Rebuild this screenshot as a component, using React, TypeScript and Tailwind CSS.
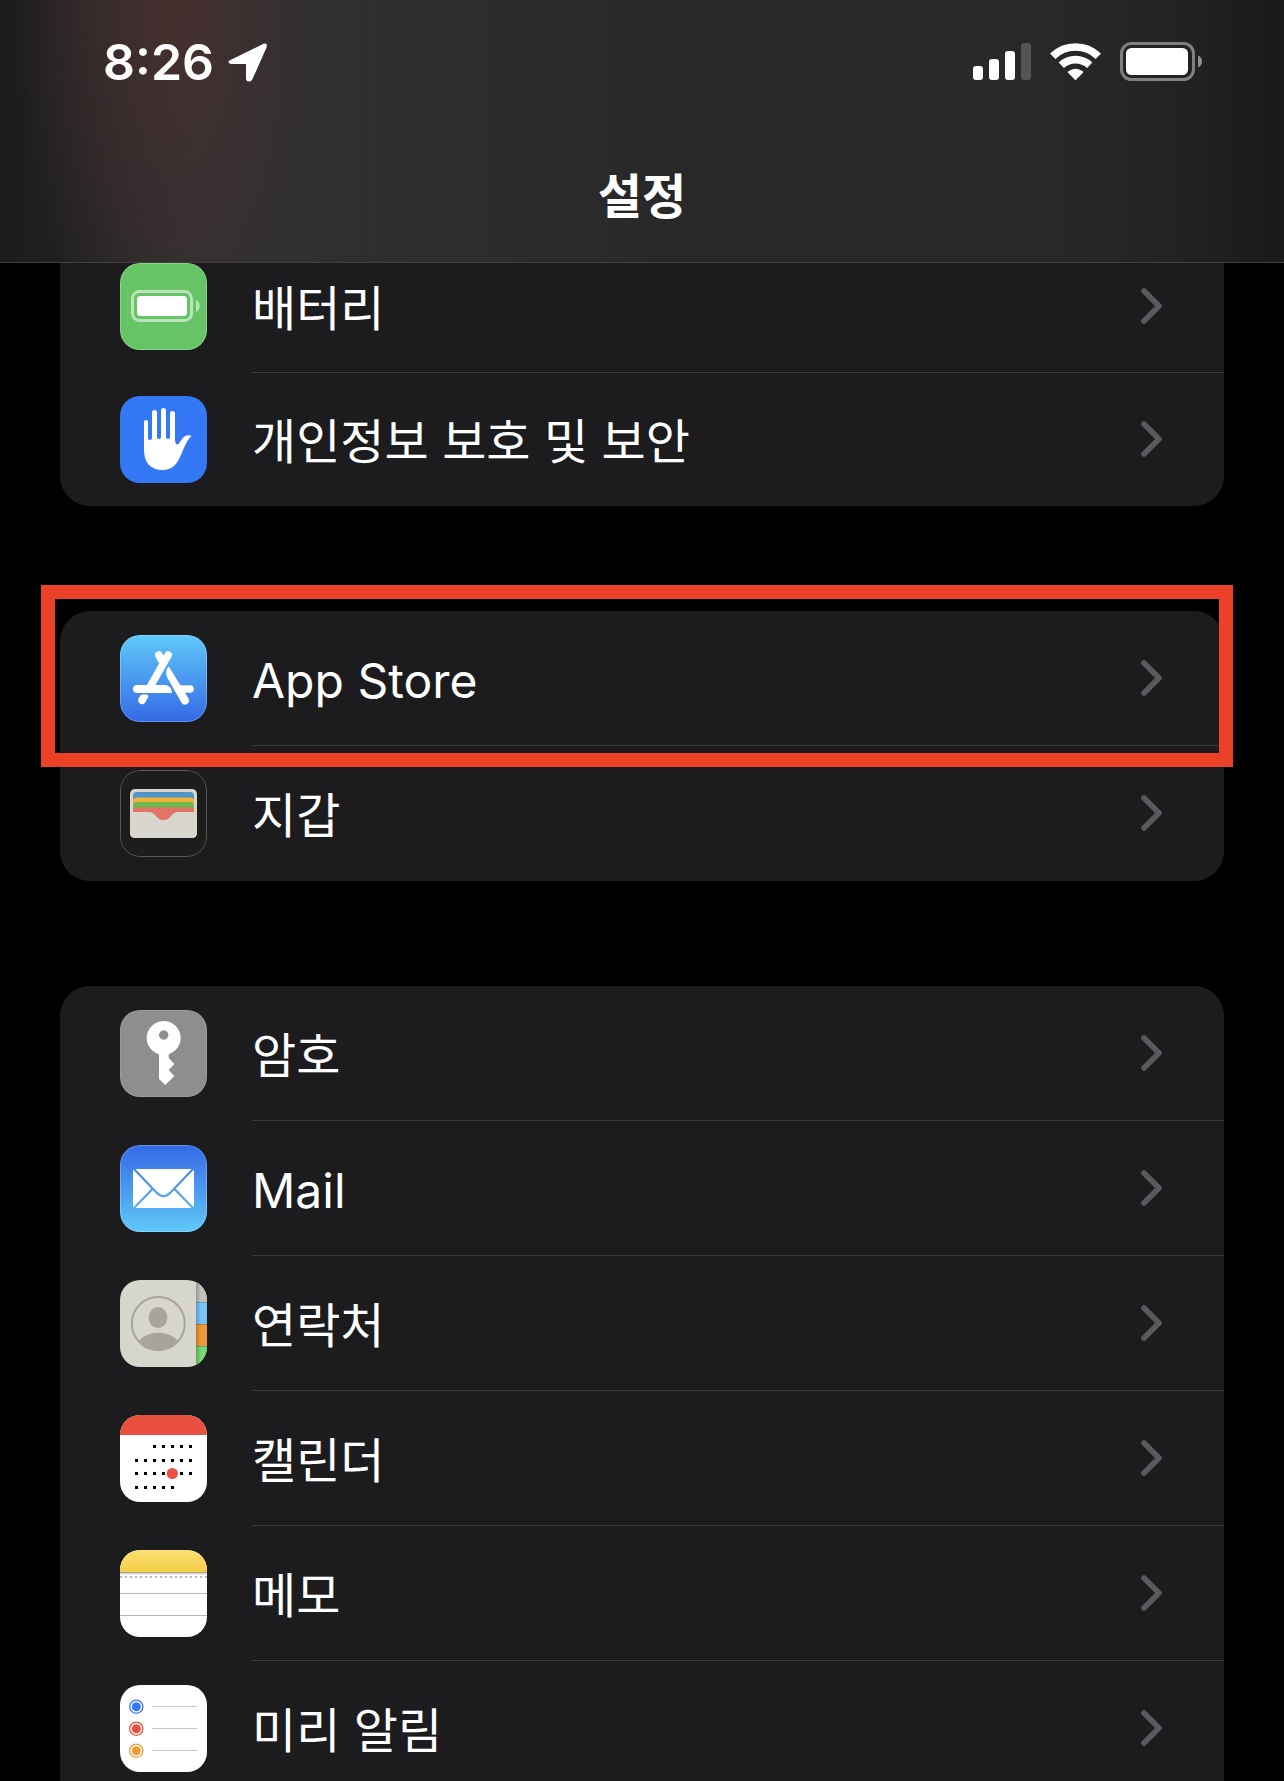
import type { ReactNode } from "react";

type RowItem = { label: string; icon: ReactNode; highlighted?: boolean };
type Group = { shape: string; rowHeight: string; items: RowItem[] };

function Tile({ children, id }: { children: ReactNode; id: string }) {
  return (
    <svg viewBox="0 0 87 87" className="size-[87px] shrink-0" aria-hidden="true">
      <defs>
        <clipPath id={`${id}-clip`}>
          <rect width="87" height="87" rx="20" />
        </clipPath>
      </defs>
      <g clipPath={`url(#${id}-clip)`}>{children}</g>
    </svg>
  );
}

function Rim({ opacity = 0.25 }: { opacity?: number }) {
  return <rect x="0.5" y="0.5" width="86" height="86" rx="19.5" fill="none" stroke="#fff" strokeOpacity={opacity} />;
}

function BatteryTile() {
  return (
    <Tile id="battery">
      <rect width="87" height="87" fill="#67c466" />
      <rect x="12.5" y="28.5" width="59" height="29" rx="7" fill="none" stroke="#fff" strokeOpacity="0.55" strokeWidth="3" />
      <rect x="17" y="33" width="50" height="20" rx="3.5" fill="#fff" />
      <path d="M76 37c5 2 5 10 0 12z" fill="#fff" fillOpacity="0.55" />
      <Rim />
    </Tile>
  );
}

function PrivacyTile() {
  return (
    <Tile id="privacy">
      <rect width="87" height="87" fill="#3478f6" />
      <path
        fill="#fff"
        d="M24 26a2 2 0 0 1 4 0V42q0 2 2 2t2-2V16.5a2.5 2.5 0 0 1 5 0V41q0 2 2 2t2-2V14.5a2.5 2.5 0 0 1 5 0V41q0 2 2 2t2-2V17.5a2.5 2.5 0 0 1 5 0V43q0 7 3.5 5C61 45 63 39.300 68.500 39.300q4.500 0 2 1.700C66 45.500 63.500 54 60 61C57 68 52 74 42.500 74C30 74 24 66 24 54Z"
      />
    </Tile>
  );
}

function AppStoreTile() {
  return (
    <Tile id="appstore">
      <defs>
        <linearGradient id="appstore-bg" x1="0" y1="0" x2="0" y2="1">
          <stop offset="0" stopColor="#5fc9f8" />
          <stop offset="1" stopColor="#3569e6" />
        </linearGradient>
      </defs>
      <rect width="87" height="87" fill="url(#appstore-bg)" />
      <g stroke="#fff" strokeWidth="7.6" strokeLinecap="round" fill="none">
        <path d="M48.200 20L29.500 53" />
        <path d="M38.800 20L42.500 26.500" />
        <path d="M61 54H70" />
      </g>
      <path fill="#fff" d="M17 50H46q5.500 1 6 8H17a4 4 0 0 1 0-8Z" />
      <path fill="#fff" d="M48.800 31.500C46 34 45.300 38.500 47.500 43L61.400 67.500a4 4 0 0 0 7-4.200Z" />
      <path fill="#fff" d="M20.500 60.300q4-2.200 8.200 0.500L25.300 67.500a3.900 3.900 0 0 1-6.800-3.700Z" />
      <Rim />
    </Tile>
  );
}

function WalletTile() {
  return (
    <Tile id="wallet">
      <rect width="87" height="87" fill="#1d1d1c" />
      <rect x="10" y="19" width="67" height="49" rx="5" fill="#d9d6cd" />
      <path d="M13 45V26q0-4 4-4H70q4 0 4 4V45Z" fill="#4e95c8" />
      <path d="M13 45V31q0-3.500 4-3.500H70q4 0 4 3.500V45Z" fill="#f2b03c" />
      <path d="M13 45V36q0-4 4-4H70q4 0 4 4V45Z" fill="#6fba4e" />
      <path d="M13 52V41q0-3.500 4-3.500H70q4 0 4 3.500V52Z" fill="#e27465" />
      <path d="M10 42H28C37 42 35 50 43.500 50S50 42 59 42H77V63q0 5-5 5H15q-5 0-5-5Z" fill="#d9d6cd" />
      <rect x="0.500" y="0.500" width="86" height="86" rx="19.500" fill="none" stroke="#58585a" />
    </Tile>
  );
}

function KeyTile() {
  return (
    <Tile id="key">
      <rect width="87" height="87" fill="#8e8e91" />
      <path
        fill="#fff"
        fillRule="evenodd"
        d="M39 44.300A17 17 0 1 1 48.700 44.200V48L54.300 54L48.700 60L54.300 66L45.300 75L39 69ZM43.700 20.300a4.700 4.700 0 1 0 0.010 0Z"
      />
      <Rim opacity={0.12} />
    </Tile>
  );
}

function MailTile() {
  return (
    <Tile id="mail">
      <defs>
        <linearGradient id="mail-bg" gradientUnits="userSpaceOnUse" x1="0" y1="0" x2="0" y2="87">
          <stop offset="0" stopColor="#3569e6" />
          <stop offset="1" stopColor="#5fc9f8" />
        </linearGradient>
      </defs>
      <rect width="87" height="87" fill="url(#mail-bg)" />
      <rect x="13" y="24" width="61" height="39" rx="2" fill="#fff" />
      <g stroke="url(#mail-bg)" strokeWidth="2" fill="none">
        <path d="M13 23L36.500 47.500Q43.500 55 50.500 47.500L74 23" />
        <path d="M32.500 44L13 64" />
        <path d="M54.500 44L74 64" />
      </g>
      <Rim />
    </Tile>
  );
}

function ContactsTile() {
  return (
    <Tile id="contacts">
      <defs>
        <linearGradient id="contacts-shade" x1="0" y1="0" x2="1" y2="0">
          <stop offset="0" stopColor="#000" stopOpacity="0.22" />
          <stop offset="1" stopColor="#000" stopOpacity="0" />
        </linearGradient>
      </defs>
      <rect width="87" height="87" fill="#d6d6cd" />
      <rect x="76" y="0" width="11" height="22" fill="#c4c2bb" />
      <rect x="76" y="22" width="11" height="22" fill="#78c4f5" />
      <rect x="76" y="44" width="11" height="22" fill="#f09a37" />
      <rect x="76" y="66" width="11" height="21" fill="#78d874" />
      <path d="M76 22.500H87M76 44.500H87M76 66.500H87" stroke="#000" strokeOpacity="0.2" />
      <rect x="76" width="5" height="87" fill="url(#contacts-shade)" />
      <circle cx="38.300" cy="43.500" r="26.500" fill="none" stroke="#a8a39d" strokeWidth="2" />
      <ellipse cx="38" cy="37.500" rx="9.300" ry="10.500" fill="#a8a39d" />
      <path d="M18.500 61C24 55 31 52.700 38.300 52.700S52.500 55 58 61A27 27 0 0 1 18.500 61Z" fill="#a8a39d" />
    </Tile>
  );
}

const calendarWeeks = [
  { y: 30, from: 2, to: 6 },
  { y: 44, from: 0, to: 6 },
  { y: 57, from: 0, to: 6 },
  { y: 71, from: 0, to: 4 },
];

function CalendarTile() {
  return (
    <Tile id="calendar">
      <rect width="87" height="87" fill="#fff" />
      <rect width="87" height="20" fill="#e9503f" />
      {calendarWeeks.map((week) =>
        Array.from({ length: week.to - week.from + 1 }, (_, i) => (
          <rect key={`${week.y}-${i}`} x={15 + 9 * (week.from + i)} y={week.y} width="3" height="3" fill="#000" />
        )),
      )}
      <circle cx="52.300" cy="58.500" r="5.600" fill="#e9503f" />
    </Tile>
  );
}

function NotesTile() {
  return (
    <Tile id="notes">
      <defs>
        <linearGradient id="notes-top" x1="0" y1="0" x2="0" y2="1">
          <stop offset="0" stopColor="#fadf74" />
          <stop offset="1" stopColor="#f6cf46" />
        </linearGradient>
      </defs>
      <rect width="87" height="87" fill="#fff" />
      <rect width="87" height="22" fill="url(#notes-top)" />
      <rect y="22" width="87" height="1.500" fill="#a9a590" />
      <rect y="23.500" width="87" height="1" fill="#dcdcdc" />
      <path d="M0 27H87" stroke="#b8b8ba" strokeWidth="2" strokeDasharray="2 3" />
      <path d="M0 43.500H87M0 65.500H87" stroke="#b8b8ba" />
    </Tile>
  );
}

const reminderColors = ["#3478f6", "#e9503f", "#f09a37"];

function RemindersTile() {
  return (
    <Tile id="reminders">
      <rect width="87" height="87" fill="#fff" />
      {reminderColors.map((color, i) => (
        <g key={color}>
          <circle cx="16.300" cy={21.7 + i * 22} r="6.600" fill="none" stroke={color} strokeWidth="1.300" />
          <circle cx="16.300" cy={21.7 + i * 22} r="4.500" fill={color} />
          <path d={`M32 ${21.5 + i * 22}H77`} stroke="#c6c6c8" />
        </g>
      ))}
    </Tile>
  );
}

const groups: Group[] = [
  {
    shape: "rounded-b-[30px] bg-[#1c1c1e]",
    rowHeight: "flex h-[133px] items-stretch pl-15",
    items: [
      { label: "배터리", icon: <BatteryTile /> },
      { label: "개인정보 보호 및 보안", icon: <PrivacyTile /> },
    ],
  },
  {
    shape: "rounded-[30px] bg-[#1c1c1e]",
    rowHeight: "flex h-[135px] items-stretch pl-15",
    items: [
      { label: "App Store", icon: <AppStoreTile />, highlighted: true },
      { label: "지갑", icon: <WalletTile /> },
    ],
  },
  {
    shape: "rounded-t-[30px] bg-[#1c1c1e]",
    rowHeight: "flex h-[135px] items-stretch pl-15",
    items: [
      { label: "암호", icon: <KeyTile /> },
      { label: "Mail", icon: <MailTile /> },
      { label: "연락처", icon: <ContactsTile /> },
      { label: "캘린더", icon: <CalendarTile /> },
      { label: "메모", icon: <NotesTile /> },
      { label: "미리 알림", icon: <RemindersTile /> },
    ],
  },
];

function Chevron() {
  return (
    <svg viewBox="0 0 21 36" className="h-9 w-[21px] shrink-0" fill="none" aria-hidden="true">
      <path d="M3 3L18 18L3 33" stroke="#5a5a5e" strokeWidth="5.600" strokeLinecap="round" strokeLinejoin="round" />
    </svg>
  );
}

function Row({ item, last, className }: { item: RowItem; last: boolean; className: string }) {
  return (
    <li className="relative">
      <a href="#" className={className}>
        <span className="flex items-center">{item.icon}</span>
        <span
          className={
            last
              ? "ml-[45px] flex flex-1 items-center justify-between border-b border-transparent pr-[62px]"
              : "ml-[45px] flex flex-1 items-center justify-between border-b border-[#3b3b3d] pr-[62px]"
          }
        >
          <span className="pt-1.5 text-[48px] leading-[60px]">{item.label}</span>
          <Chevron />
        </span>
      </a>
      {item.highlighted && (
        <div className="pointer-events-none absolute -top-[26px] -right-[9px] -bottom-[21px] -left-[19px] z-10 border-[14px] border-[#eb4127]" />
      )}
    </li>
  );
}

function StatusBar() {
  return (
    <div className="flex h-[123px] items-center justify-between pr-[82px] pl-[103px]">
      <div className="flex items-center gap-3.5">
        <span className="text-[50px] leading-[60px] font-semibold">8:26</span>
        <svg viewBox="0 0 40 40" className="size-10" aria-hidden="true">
          <path
            d="M2.500 18L35 2Q40 0 38.500 5.500L24.500 37Q23.500 39.500 21 39.500Q18 39.500 18 36V22H4Q0.500 22 0.500 19.500Q0.500 18.700 2.500 18Z"
            fill="#fff"
          />
        </svg>
      </div>
      <div className="flex items-center gap-[19px]">
        <svg viewBox="0 0 58 37" className="h-[37px] w-[58px]" fill="#fff" aria-label="Signal">
          <rect x="0" y="23" width="10" height="14" rx="3" />
          <rect x="16" y="16" width="10" height="21" rx="3" />
          <rect x="32" y="8" width="10" height="29" rx="3" />
          <rect x="48" y="0" width="10" height="37" rx="3" fill="#545454" />
        </svg>
        <svg viewBox="0 0 51 37" className="h-[37px] w-[51px]" aria-label="Wi-Fi">
          <g fill="none" stroke="#fff" strokeWidth="7.600">
            <path d="M2.700 13.300A32.500 32.500 0 0 1 48.300 13.300" />
            <path d="M11.300 22.300A20.500 20.500 0 0 1 39.700 22.300" />
          </g>
          <path d="M25.500 37.300L17.800 29.600Q17.500 29 18 28.500Q25.500 22.900 33 28.500Q33.500 29 33.200 29.600Z" fill="#fff" />
        </svg>
        <svg viewBox="0 0 82 39" className="h-[39px] w-[82px]" aria-label="Battery">
          <rect x="1.500" y="1.500" width="72" height="36" rx="10" fill="none" stroke="#808080" strokeWidth="3" />
          <rect x="6" y="6" width="62" height="27" rx="5.500" fill="#fff" />
          <path d="M78 13.500c5.500 2 5.500 10 0 12z" fill="#909090" />
        </svg>
      </div>
    </div>
  );
}

export default function App() {
  return (
    <div className="flex h-screen flex-col overflow-hidden bg-black font-['Inter','Noto_Sans_CJK_KR',sans-serif] text-white">
      <header className="relative z-20 h-[263px] shrink-0 border-b border-[#404042] bg-[radial-gradient(ellipse_160px_360px_at_170px_0px,#4b2f2ed9,#43303199_45%,#38303200),linear-gradient(90deg,#1b1b1b,#242323_7%,#323031_15%,#2f2f2f_26%,#2d2d2d_36%,#282828_52%,#282828_82%,#222222_92%,#191919)]">
        <StatusBar />
        <h1 className="pt-11 text-center text-[48px] leading-[60px] font-bold">설정</h1>
      </header>
      <main className="-mt-[23px] flex flex-col gap-[105px] px-15">
        {groups.map((group) => (
          <ul key={group.items[0].label} className={group.shape}>
            {group.items.map((item, i) => (
              <Row key={item.label} item={item} last={i === group.items.length - 1} className={group.rowHeight} />
            ))}
          </ul>
        ))}
      </main>
    </div>
  );
}
